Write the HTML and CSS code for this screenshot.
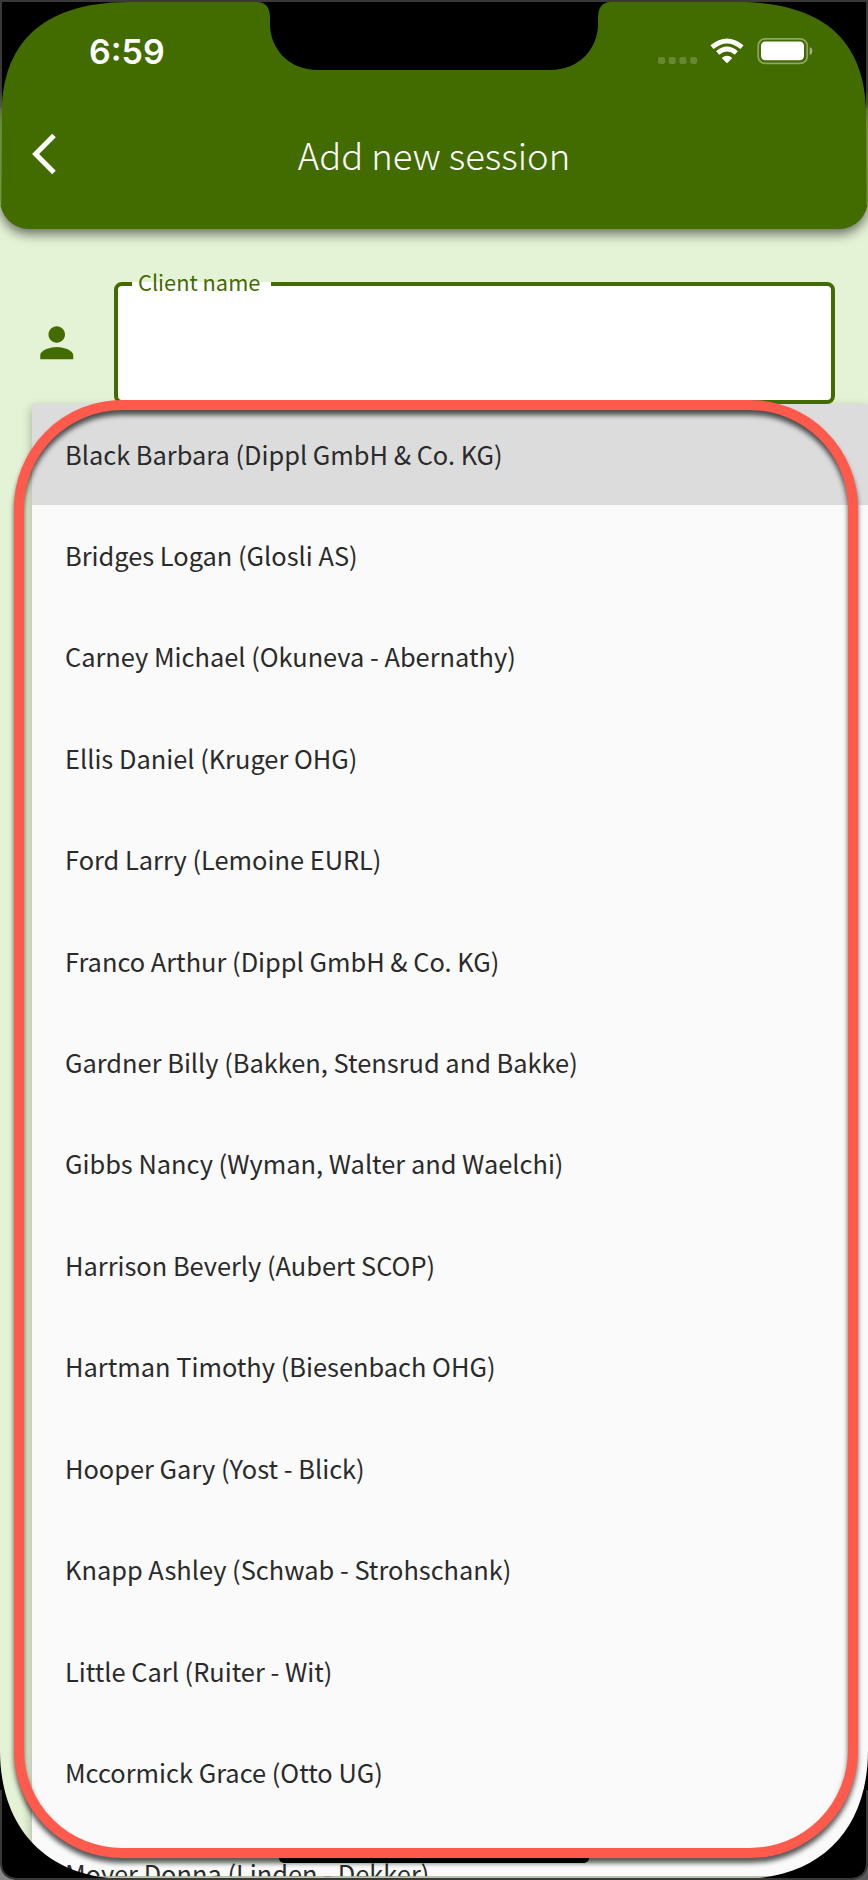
FILE: index.html
```html
<!DOCTYPE html>
<html lang="en">
<head>
<meta charset="utf-8">
<title>Add new session</title>
<link rel="stylesheet" href="styles.css">
</head>
<body>
<div class="phone">
  <header class="header">
    <div class="status">
      <span class="time">6:59</span>
      <svg class="indicators" width="158" height="30" viewBox="0 0 158 30">
        <g fill="#fff" fill-opacity=".2">
          <rect x="2" y="21" width="7" height="7" rx="2"/><rect x="12.7" y="21" width="7" height="7" rx="2"/>
          <rect x="23.4" y="21" width="7" height="7" rx="2"/><rect x="34.1" y="21" width="7" height="7" rx="2"/>
        </g>
        <g fill="none" stroke="#fff" stroke-width="4.8">
          <path d="M56 11.2Q71 -1.2 86 11.2"/><path d="M61.7 17Q71 9.2 80.3 17"/>
        </g>
        <path d="M65.7 22.1Q71 17.5 76.3 22.1L71.6 26.8Q71 27.4 70.4 26.8Z" fill="#fff"/>
        <rect x="102.2" y="2.8" width="49" height="24.6" rx="7" fill="none" stroke="#fff" stroke-opacity=".4" stroke-width="1.7"/>
        <rect x="105" y="5.6" width="43" height="18.6" rx="4.2" fill="#fff"/>
        <path d="M153.7 11.2Q156.4 12 156.4 15T153.7 19Z" fill="#fff" fill-opacity=".5"/>
      </svg>
    </div>
    <div class="titlebar">
      <svg class="back" width="28" height="46" viewBox="0 0 28 46"><path d="M22 4.6L3.6 23L22 41.4" fill="none" stroke="#fff" stroke-width="5"/></svg>
      <h1 class="title">Add new session</h1>
    </div>
  </header>
  <main class="form">
    <svg class="person" width="49.5" height="49.5" viewBox="0 0 24 24"><path fill="#426b00" d="M12 12c2.21 0 4-1.79 4-4s-1.79-4-4-4-4 1.79-4 4 1.79 4 4 4zm0 2c-2.67 0-8 1.34-8 4v2h16v-2c0-2.66-5.33-4-8-4z"/></svg>
    <div class="field"><span class="label">Client name</span></div>
  </main>
  <ul class="menu">
    <li class="item selected">Black Barbara (Dippl GmbH &amp; Co. KG)</li>
    <li class="item">Bridges Logan (Glosli AS)</li>
    <li class="item">Carney Michael (Okuneva - Abernathy)</li>
    <li class="item">Ellis Daniel (Kruger OHG)</li>
    <li class="item">Ford Larry (Lemoine EURL)</li>
    <li class="item">Franco Arthur (Dippl GmbH &amp; Co. KG)</li>
    <li class="item">Gardner Billy (Bakken, Stensrud and Bakke)</li>
    <li class="item">Gibbs Nancy (Wyman, Walter and Waelchi)</li>
    <li class="item">Harrison Beverly (Aubert SCOP)</li>
    <li class="item">Hartman Timothy (Biesenbach OHG)</li>
    <li class="item">Hooper Gary (Yost - Blick)</li>
    <li class="item">Knapp Ashley (Schwab - Strohschank)</li>
    <li class="item">Little Carl (Ruiter - Wit)</li>
    <li class="item">Mccormick Grace (Otto UG)</li>
    <li class="item">Moyer Donna (Linden - Dekker)</li>
  </ul>
  <div class="highlight"></div>
  <div class="home"></div>
  <svg class="bezel" width="868" height="1880" viewBox="0 0 868 1880">
    <defs>
      <linearGradient id="edge" x1="0" y1="0" x2="0" y2="1">
        <stop offset="0" stop-color="#393939"/><stop offset=".3" stop-color="#7f9a5a" stop-opacity=".7"/><stop offset="1" stop-color="#8fb070" stop-opacity=".6"/>
      </linearGradient>
    </defs>
    <path d="M0 1876.3H868V1880H0Z" fill="#b7c5a9"/>
    <path d="M0 0H434V70H318C288 70 270 48 270 24V18Q270 2 257 2H130C35 2 4 50 2 108H0Z"/>
    <path d="M868 0H434V70H550C580 70 598 48 598 24V18Q598 2 611 2H738C833 2 864 50 866 108H868Z"/>
    <path d="M0 1750C0 1830 48 1878 125 1879V1880H0Z"/>
    <path d="M868 1750C868 1830 820 1878 743 1879V1880H868Z"/>
    <path d="M0 1862Q2 1878 18 1880H0Z" fill="#888"/>
    <path d="M868 1862Q866 1878 850 1880H868Z" fill="#59595b"/>
    <path d="M0 90V0H868V90H866V2H2V90ZM0 1790H2V1864Q3 1877 17 1878H851Q865 1877 866 1864V1790H868V1864Q867 1879 851 1880H17Q1 1879 0 1864Z" fill="#393939"/>
    <path d="M0 90H2V110L1.4 205H0ZM868 90H866V110L866.6 205H868Z" fill="url(#edge)"/>
  </svg>
</div>
</body>
</html>
```
FILE: styles.css
```css
* { box-sizing: border-box; }
body { margin: 0; font-family: "Noto Sans CJK SC", "Noto Sans", sans-serif; }
.phone { position: relative; width: 868px; height: 1880px; overflow: hidden; background: #e4f2d5; }
.header { height: 229px; background: #426b00; border-radius: 0 0 29px 29px; box-shadow: 0 5px 12px rgba(0,0,0,.55); color: #fff; }
.status { display: flex; justify-content: space-between; align-items: flex-start; height: 109px; padding: 36px 54px 0 89px; }
.time { font: 600 34px/31px Inter, sans-serif; }
.titlebar { display: grid; grid-template-columns: 88px 1fr 88px; align-items: center; height: 90px; }
.back { margin-left: 32px; }
.title { margin: 0; text-align: center; font-size: 36.4px; font-weight: 300; line-height: 50px; }
.form { display: flex; height: 174.5px; padding: 53px 33px 0 32px; gap: 32.5px; }
.person { margin-top: 36px; flex: none; }
.field { flex: 1; height: 121.5px; border: 4px solid #426b00; border-radius: 8px; background: #fff; }
.label { display: block; width: 139px; height: 28px; margin: -18px 0 0 14px; padding-left: 6px; font-size: 21.8px; line-height: 28px; color: #426b00; background: linear-gradient(#e4f2d5 14px, #fff 14px); white-space: nowrap; }
.menu { list-style: none; margin: 0 0 0 32px; padding: 0; height: 1472.5px; overflow: visible; background: #fafafa; box-shadow: 0 4px 10px rgba(0,0,0,.3); }
.item { height: 101.43px; padding-left: 33px; font-size: 25.4px; line-height: 100px; color: #2a2a2a; white-space: nowrap; }
.selected { background: #dcdcdc; }
.highlight { position: absolute; left: 14px; top: 400px; width: 844px; height: 1458px; border: 10px solid #ff5a4b; border-radius: 108px; filter: drop-shadow(0 5px 2.5px rgba(0,0,0,.65)); }
.home { position: absolute; left: 279px; top: 1858px; width: 310px; height: 5px; background: #000; border-radius: 0 0 5px 5px; }
.bezel { position: absolute; left: 0; top: 0; }
```
